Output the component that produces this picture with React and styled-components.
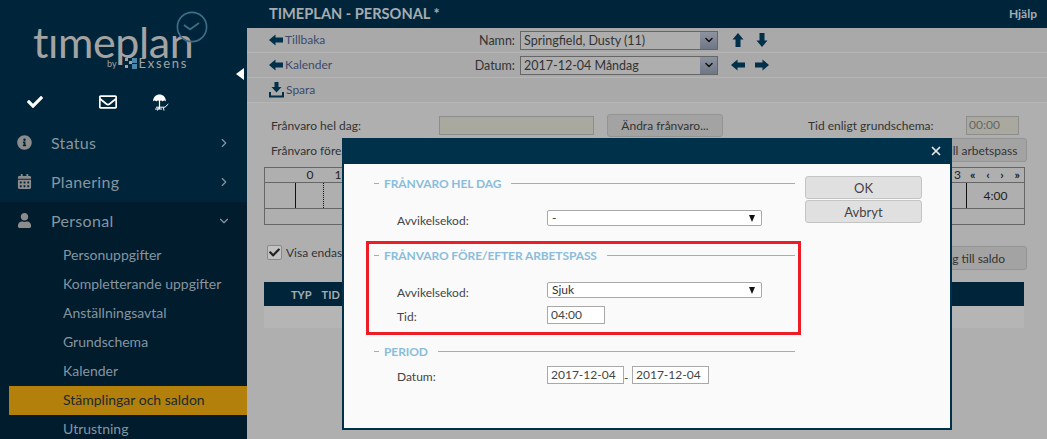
import React from "react";
import styled, { createGlobalStyle } from "styled-components";
import { FaCheck, FaInfoCircle, FaCalendarAlt, FaUser, FaRegEnvelope } from "react-icons/fa";
import { ChevronRight, ChevronDown, X } from "lucide-react";

const Global = createGlobalStyle`
  html, body { margin: 0; padding: 0; height: 100%; overflow: hidden; }
  body { font-family: Lato, "Open Sans", sans-serif; background: #afafaf; }
  * { box-sizing: border-box; }
`;

function Arrow({ dir = "left", size = 14 }) {
  const rot = { left: 0, up: 90, right: 180, down: 270 }[dir];
  return (
    <svg width={size} height={size} viewBox="0 0 14 14" style={{ transform: `rotate(${rot}deg)`, flex: "none" }}>
      <path d="M0 7 L6.5 1.5 V4.5 H14 V9.5 H6.5 V12.5 Z" fill="#00304a" />
    </svg>
  );
}

function SaveIcon() {
  return (
    <svg width="15" height="16" viewBox="0 0 15 16" style={{ flex: "none" }}>
      <path d="M5.5 0 H9.5 V5 H12.5 L7.5 10.5 L2.5 5 H5.5 Z M0 10 H2 V13.5 H13 V10 H15 V15.5 H0 Z" fill="#00304a" />
    </svg>
  );
}

function BeachIcon() {
  return (
    <svg width="16" height="17" viewBox="0 0 16 17" style={{ display: "block" }}>
      <path d="M0 7.5 C.3 3 3 .6 6.5 .6 C10 .6 12.7 3 13 7.5 C12 6.3 10.7 6.3 9.7 7.5 C8.7 6.3 7.3 6.3 6.5 7.5 C5.7 6.3 4.3 6.3 3.3 7.5 C2.3 6.3 1 6.3 0 7.5 Z" fill="#fff" />
      <path d="M6.5 7 V14.4 M2 15 H9" stroke="#fff" strokeWidth="1.2" fill="none" />
      <path d="M3 13.2 H12 L15.3 10 M4.5 16.5 L5.5 13.5 M11 16.5 L10.3 13.5" stroke="#fff" strokeWidth="1" fill="none" />
    </svg>
  );
}

function LogoClock() {
  return (
    <svg width="34" height="34" viewBox="0 0 34 34" style={{ display: "block" }}>
      <circle cx="17" cy="17" r="14.6" fill="none" stroke="#3f6f88" strokeWidth="1.6" />
      <path d="M9 15 L15 19.5 L24 13" fill="none" stroke="#3f6f88" strokeWidth="1.8" />
    </svg>
  );
}

function SquaresMark() {
  return (
    <svg width="13" height="11" viewBox="0 0 13 11" style={{ display: "block" }}>
      <path d="M0 0h3v3H0z M4 3h3v3H4z M0 7h3v3H0z" fill="#9aa3a8" />
      <path d="M7 0h5v5H7z M7 6h5v5H7z" fill="#4a86a8" />
    </svg>
  );
}

const Page = styled.div`
  position: relative;
  width: 1047px;
  height: 439px;
  display: flex;
  overflow: hidden;
`;

const Sidebar = styled.aside`
  position: relative;
  width: 247px;
  flex: none;
  background: #00253a;
  display: flex;
  flex-direction: column;
  overflow: hidden;
`;

const LogoBox = styled.div`
  position: relative;
  height: 89px;
  flex: none;
`;

const LogoText = styled.div`
  position: absolute;
  left: 33px;
  top: 26px;
  font-size: 43px;
  font-weight: 400;
  line-height: 32px;
  letter-spacing: -0.4px;
  color: #a3a3a3;
`;

const LogoClockWrap = styled.div`
  position: absolute;
  left: 175px;
  top: 10px;
`;

const LogoBy = styled.div`
  position: absolute;
  left: 107px;
  top: 58px;
  height: 11px;
  display: flex;
  align-items: center;
  font-size: 9px;
  line-height: 11px;
  color: #a3a3a3;
`;

const LogoMark = styled.span`
  margin: 0 1px 0 8px;
`;

const LogoBrand = styled.span`
  font-size: 13px;
  line-height: 11px;
  letter-spacing: 1.7px;
  color: #a3a3a3;
`;

const Collapse = styled.div`
  position: absolute;
  left: 236px;
  top: 68px;
  width: 0;
  height: 0;
  border-top: 6px solid transparent;
  border-bottom: 6px solid transparent;
  border-right: 8px solid #fff;
`;

const QuickIcons = styled.div`
  height: 26px;
  flex: none;
  display: flex;
  align-items: center;
  padding-left: 27px;
  margin-bottom: 9px;
  color: #fff;
  font-size: 16px;
`;

const QuickSlot = styled.div`
  width: ${(p) => p.$w}px;
  flex: none;
  display: flex;
  align-items: center;
`;

const NavItem = styled.div`
  height: 39px;
  flex: none;
  display: flex;
  align-items: center;
  padding: 0 16px 2px 17px;
  color: #8695a0;
  background: ${(p) => (p.$open ? "#001c2d" : "transparent")};
  font-size: 16px;
  letter-spacing: 0.3px;
`;

const NavIcon = styled.span`
  width: 34px;
  display: flex;
  color: #8c8c8c;
  font-size: 15px;
`;

const NavLabel = styled.span`
  flex: 1;
`;

const SubList = styled.div`
  flex: 1;
  background: #001c2d;
  padding: 0 0 0 9px;
`;

const SubItem = styled.div`
  height: 29px;
  line-height: 28px;
  padding-left: 54px;
  font-size: 14px;
  color: ${(p) => (p.$active ? "#1c2a2e" : "#8695a0")};
  background: ${(p) => (p.$active ? "#b3800c" : "transparent")};
`;

const Main = styled.main`
  flex: 1;
  min-width: 0;
  display: flex;
  flex-direction: column;
`;

const TopBar = styled.header`
  height: 28px;
  flex: none;
  background: #00253a;
  display: flex;
  align-items: center;
  justify-content: space-between;
  padding: 0 10px 1px 22px;
  color: #a6acb0;
  font-weight: 700;
`;

const Title = styled.span`
  font-size: 14.6px;
`;

const Help = styled.span`
  font-size: 12px;
`;

const ToolRow = styled.div`
  height: 25px;
  flex: none;
  background: #a9a9a9;
  border-bottom: 1px solid #b6b6b6;
  display: flex;
  align-items: center;
  padding-left: 22px;
  font-size: 12.5px;
`;

const ToolLink = styled.a`
  width: 205px;
  display: flex;
  align-items: center;
  gap: 2px;
  color: #3c4a6c;
  font-size: 12px;
  span { position: relative; top: -1px; }
`;

const ToolLabel = styled.span`
  width: 41px;
  text-align: right;
  color: #333;
  font-size: 12.5px;
  white-space: nowrap;
`;

const ToolSelect = styled.div`
  width: 198px;
  height: 19px;
  margin-left: 5px;
  margin-right: 13px;
  background: #aeaeae;
  border: 1px solid #666;
  display: flex;
  align-items: center;
  justify-content: space-between;
  padding-left: 3px;
  color: #333;
  font-size: 12.5px;
`;

const SelectBtn = styled.span`
  width: 17px;
  height: 17px;
  background: linear-gradient(#8d93a0, #6f7686);
  display: flex;
  align-items: center;
  justify-content: center;
  color: #111;
`;

const ArrowPair = styled.div`
  display: flex;
  gap: 10px;
`;

const Content = styled.div`
  flex: 1;
  background: #afafaf;
  padding: 9px 20px 0 17px;
  font-size: 12px;
  color: #333;
`;

const FormRow = styled.div`
  height: ${(p) => p.$h || 26}px;
  display: flex;
  align-items: ${(p) => p.$align || "center"};
  padding-left: ${(p) => p.$pad ?? 7}px;
  margin-top: ${(p) => p.$mt || 0}px;
`;

const FieldLabel = styled.span`
  width: 168px;
  flex: none;
  white-space: nowrap;
`;

const GhostField = styled.div`
  width: 155px;
  height: 19px;
  background: #a9a99f;
  border: 1px solid #8d8d8d;
`;

const GhostButton = styled.div`
  height: ${(p) => p.$h || 23}px;
  width: ${(p) => p.$w || 116}px;
  background: #a3a3a3;
  border: 1px solid #949494;
  border-radius: 3px;
  display: flex;
  align-items: center;
  justify-content: center;
  margin-left: ${(p) => (p.$ml ? `${p.$ml}px` : "auto")};
  font-size: 12px;
  color: #333;
  flex: none;
  white-space: nowrap;
`;

const RightLabel = styled.span`
  margin-left: 85px;
  width: 158px;
  flex: none;
`;

const TimeField = styled.div`
  width: 53px;
  height: 19px;
  background: #a9a99f;
  border: 1px solid #8d8d8d;
  color: #666;
  padding-left: 2px;
  line-height: 16px;
`;

const Timeline = styled.div`
  width: 761px;
  height: 58px;
  margin-top: 5px;
  border: 1px solid #666;
  display: flex;
  flex-direction: column;
  color: #222;
`;

const HourRow = styled.div`
  height: 15px;
  flex: none;
  border-bottom: 1px solid #666;
  display: flex;
  line-height: 14px;
`;

const HourCell = styled.span`
  width: ${(p) => p.$w}px;
  flex: ${(p) => (p.$grow ? 1 : "none")};
  text-align: ${(p) => p.$align || "center"};
  padding-right: ${(p) => p.$pr || 0}px;
`;

const NavGlyphs = styled.span`
  width: 57px;
  display: flex;
  justify-content: space-between;
  padding: 0 4px 0 3px;
  font-weight: 700;
  flex: none;
`;

const BodyRow = styled.div`
  height: 26px;
  flex: none;
  border-bottom: 1px solid #666;
  display: flex;
`;

const SlotCell = styled.div`
  width: ${(p) => p.$w}px;
  flex: ${(p) => (p.$grow ? 1 : "none")};
  border-right: ${(p) => (p.$line ? `1px ${p.$line} #111` : "none")};
`;

const TotalCell = styled.div`
  width: 57px;
  flex: none;
  display: flex;
  align-items: center;
  justify-content: center;
  font-size: 12px;
`;

const VisaOnly = styled.label`
  display: flex;
  align-items: center;
  height: 15px;
  margin-top: -1px;
  white-space: nowrap;
`;

const Check = styled.span`
  width: 15px;
  height: 15px;
  flex: none;
  background: #c2c2c2;
  border: 1px solid #8a8a8a;
  border-radius: 2px;
  display: flex;
  align-items: center;
  justify-content: center;
  font-size: 11px;
  color: #222;
  margin-right: 4px;
`;

const ListHead = styled.div`
  width: 760px;
  height: 24px;
  margin-top: 12px;
  background: #00253a;
  color: #a6acb0;
  display: flex;
  align-items: center;
  padding-left: 27px;
  gap: 10px;
  font-size: 11px;
  font-weight: 700;
`;

const ListRow = styled.div`
  width: 760px;
  height: 22px;
  background: #b5b5b5;
`;

const Modal = styled.div`
  position: absolute;
  left: 342px;
  top: 138px;
  width: 610px;
  height: 292px;
  background: #fafafa;
  border: 2px solid #00314b;
  border-top: none;
  display: flex;
  flex-direction: column;
`;

const ModalHead = styled.div`
  height: 26px;
  flex: none;
  margin: 0 -2px;
  background: #00314b;
  color: #e6e6e6;
  display: flex;
  align-items: center;
  justify-content: flex-end;
  padding-right: 9px;
`;

const ModalBody = styled.div`
  flex: 1;
  display: flex;
  padding: 11px 28px 0 22px;
`;

const FormCol = styled.div`
  width: 435px;
  flex: none;
`;

const Group = styled.section`
  padding: ${(p) => p.$top || 0}px 6px 0 8px;
  height: ${(p) => p.$h}px;
`;

const Marked = styled.section`
  height: 94px;
  padding: 3px 3px 0 5px;
  border: 3px solid #ee1c25;
`;

const Legend = styled.div`
  height: 16px;
  display: flex;
  align-items: center;
  font-size: 12px;
  font-weight: 700;
  letter-spacing: -0.1px;
  color: #8abddb;
  margin-bottom: ${(p) => p.$mb || 0}px;
  &::before {
    content: "";
    width: 5px;
    height: 1px;
    background: #7fb9da;
    margin-right: 5px;
    flex: none;
  }
  &::after {
    content: "";
    flex: 1;
    height: 1px;
    background: #7fb9da;
    margin-left: 10px;
  }
`;

const Row = styled.div`
  height: 24px;
  display: flex;
  align-items: flex-start;
  padding-left: 23px;
  font-size: 12px;
  line-height: 22px;
  color: #444;
`;

const RowLabel = styled.span`
  width: 150px;
  flex: none;
`;

const Drop = styled.div`
  width: 215px;
  height: 16px;
  background: #fff;
  border: 1px solid #a9a9a9;
  border-radius: 2px;
  display: flex;
  align-items: center;
  justify-content: space-between;
  padding: 0 6px 0 4px;
  font-size: 12px;
  line-height: 14px;
  color: #333;
`;

const Caret = styled.span`
  width: 0;
  height: 0;
  border-left: 3.5px solid transparent;
  border-right: 3.5px solid transparent;
  border-top: 7px solid #111;
`;

const TextBox = styled.div`
  width: ${(p) => p.$w}px;
  height: 18px;
  background: #fff;
  border: 1px solid #a9a9a9;
  padding-left: 3px;
  font-size: 12px;
  line-height: 15px;
  color: #444;
  flex: none;
`;

const Dash = styled.span`
  width: 8px;
  line-height: 24px;
  flex: none;
`;

const ButtonCol = styled.div`
  width: 117px;
  margin-left: 4px;
  padding-top: 1px;
  display: flex;
  flex-direction: column;
  gap: 1px;
  flex: none;
`;

const DlgButton = styled.button`
  height: 23px;
  padding: 0;
  background: #e0e0e0;
  border: 1px solid #c4c4c4;
  border-radius: 3px;
  font-family: inherit;
  font-size: 13px;
  color: #444;
`;

const submenu = [
  "Personuppgifter",
  "Kompletterande uppgifter",
  "Anställningsavtal",
  "Grundschema",
  "Kalender",
  "Stämplingar och saldon",
  "Utrustning",
];

export default function App() {
  return (
    <Page>
      <Global />
      <Sidebar>
        <LogoBox>
          <LogoText>tımeplan</LogoText>
          <LogoClockWrap><LogoClock /></LogoClockWrap>
          <LogoBy>
            by<LogoMark><SquaresMark /></LogoMark><LogoBrand>Exsens</LogoBrand>
          </LogoBy>
          <Collapse />
        </LogoBox>
        <QuickIcons>
          <QuickSlot $w={72}><FaCheck /></QuickSlot>
          <QuickSlot $w={54}><FaRegEnvelope size={18} /></QuickSlot>
          <QuickSlot $w={20}><BeachIcon /></QuickSlot>
        </QuickIcons>
        <NavItem>
          <NavIcon><FaInfoCircle /></NavIcon>
          <NavLabel>Status</NavLabel>
          <ChevronRight size={14} />
        </NavItem>
        <NavItem>
          <NavIcon><FaCalendarAlt /></NavIcon>
          <NavLabel>Planering</NavLabel>
          <ChevronRight size={14} />
        </NavItem>
        <NavItem $open>
          <NavIcon><FaUser /></NavIcon>
          <NavLabel>Personal</NavLabel>
          <ChevronDown size={14} />
        </NavItem>
        <SubList>
          {submenu.map((s) => (
            <SubItem key={s} $active={s.startsWith("Stämp")}>{s}</SubItem>
          ))}
        </SubList>
      </Sidebar>

      <Main>
        <TopBar>
          <Title>TIMEPLAN - PERSONAL *</Title>
          <Help>Hjälp</Help>
        </TopBar>
        <ToolRow>
          <ToolLink><Arrow /><span>Tillbaka</span></ToolLink>
          <ToolLabel>Namn:</ToolLabel>
          <ToolSelect>Springfield, Dusty (11)<SelectBtn><ChevronDown size={12} strokeWidth={3} /></SelectBtn></ToolSelect>
          <ArrowPair><Arrow dir="up" /><Arrow dir="down" /></ArrowPair>
        </ToolRow>
        <ToolRow>
          <ToolLink><Arrow /><span>Kalender</span></ToolLink>
          <ToolLabel>Datum:</ToolLabel>
          <ToolSelect>2017-12-04 Måndag<SelectBtn><ChevronDown size={12} strokeWidth={3} /></SelectBtn></ToolSelect>
          <ArrowPair><Arrow /><Arrow dir="right" /></ArrowPair>
        </ToolRow>
        <ToolRow>
          <ToolLink><SaveIcon /><span>Spara</span></ToolLink>
        </ToolRow>
        <Content>
          <FormRow>
            <FieldLabel>Frånvaro hel dag:</FieldLabel>
            <GhostField />
            <GhostButton $ml={13}>Ändra frånvaro...</GhostButton>
            <RightLabel>Tid enligt grundschema:</RightLabel>
            <TimeField>00:00</TimeField>
          </FormRow>
          <FormRow $h={24}>
            <FieldLabel>Frånvaro före/efter:</FieldLabel>
            <GhostButton $w={119} $h={24}>Lägg till arbetspass</GhostButton>
          </FormRow>
          <Timeline>
            <HourRow>
              <HourCell $w={31} />
              <HourCell $w={28}>0</HourCell>
              <HourCell $w={28}>1</HourCell>
              <HourCell $grow $align="right" $pr={6}>3</HourCell>
              <NavGlyphs><span>«</span><span>‹</span><span>›</span><span>»</span></NavGlyphs>
            </HourRow>
            <BodyRow>
              <SlotCell $w={31} $line="solid" />
              <SlotCell $w={28} $line="dotted" />
              <SlotCell $w={28} />
              <SlotCell $grow $line="solid" />
              <TotalCell>4:00</TotalCell>
            </BodyRow>
          </Timeline>
          <FormRow $h={24} $pad={3} $align="flex-start" $mt={21}>
            <VisaOnly><Check><FaCheck /></Check>Visa endast</VisaOnly>
            <GhostButton $w={115} $h={24}>Lägg till saldo</GhostButton>
          </FormRow>
          <ListHead><span>TYP</span><span>TID</span></ListHead>
          <ListRow />
        </Content>
      </Main>

      <Modal>
        <ModalHead><X size={14} strokeWidth={3} /></ModalHead>
        <ModalBody>
          <FormCol>
            <Group $h={66}>
              <Legend $mb={19}>FRÅNVARO HEL DAG</Legend>
              <Row>
                <RowLabel>Avvikelsekod:</RowLabel>
                <Drop>-<Caret /></Drop>
              </Row>
            </Group>
            <Marked>
              <Legend $mb={19}>FRÅNVARO FÖRE/EFTER ARBETSPASS</Legend>
              <Row>
                <RowLabel>Avvikelsekod:</RowLabel>
                <Drop>Sjuk<Caret /></Drop>
              </Row>
              <Row>
                <RowLabel>Tid:</RowLabel>
                <TextBox $w={58}>04:00</TextBox>
              </Row>
            </Marked>
            <Group $h={60} $top={8}>
              <Legend $mb={7}>PERIOD</Legend>
              <Row>
                <RowLabel>Datum:</RowLabel>
                <TextBox $w={77}>2017-12-04</TextBox>
                <Dash>-</Dash>
                <TextBox $w={77}>2017-12-04</TextBox>
              </Row>
            </Group>
          </FormCol>
          <ButtonCol>
            <DlgButton>OK</DlgButton>
            <DlgButton>Avbryt</DlgButton>
          </ButtonCol>
        </ModalBody>
      </Modal>
    </Page>
  );
}
